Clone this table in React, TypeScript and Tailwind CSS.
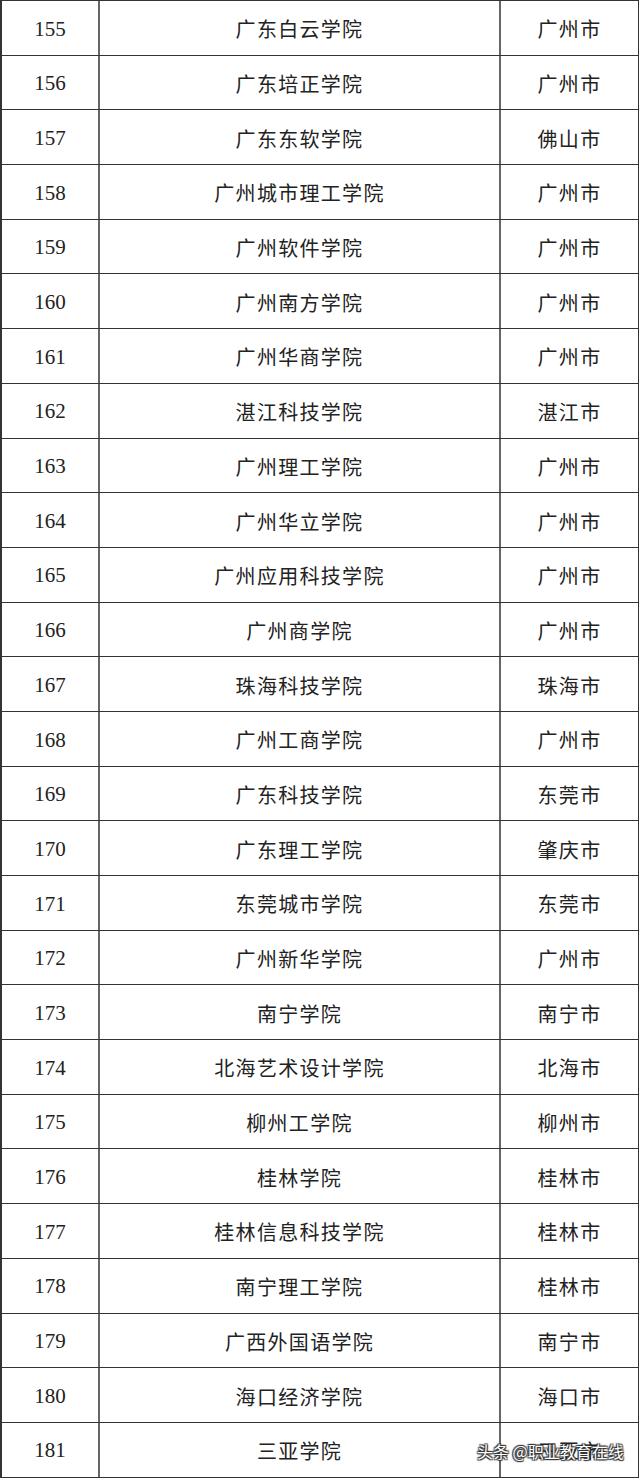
const rows: [number, string, string][] = [
  [155, "广东白云学院", "广州市"],
  [156, "广东培正学院", "广州市"],
  [157, "广东东软学院", "佛山市"],
  [158, "广州城市理工学院", "广州市"],
  [159, "广州软件学院", "广州市"],
  [160, "广州南方学院", "广州市"],
  [161, "广州华商学院", "广州市"],
  [162, "湛江科技学院", "湛江市"],
  [163, "广州理工学院", "广州市"],
  [164, "广州华立学院", "广州市"],
  [165, "广州应用科技学院", "广州市"],
  [166, "广州商学院", "广州市"],
  [167, "珠海科技学院", "珠海市"],
  [168, "广州工商学院", "广州市"],
  [169, "广东科技学院", "东莞市"],
  [170, "广东理工学院", "肇庆市"],
  [171, "东莞城市学院", "东莞市"],
  [172, "广州新华学院", "广州市"],
  [173, "南宁学院", "南宁市"],
  [174, "北海艺术设计学院", "北海市"],
  [175, "柳州工学院", "柳州市"],
  [176, "桂林学院", "桂林市"],
  [177, "桂林信息科技学院", "桂林市"],
  [178, "南宁理工学院", "桂林市"],
  [179, "广西外国语学院", "南宁市"],
  [180, "海口经济学院", "海口市"],
  [181, "三亚学院", "三亚市"],
];

const cjk = "font-['Noto_Sans_CJK_SC',sans-serif]";

export default function App() {
  return (
    <div className="relative w-[640px] bg-white text-[#222]">
      <div className="w-[639px] border-l-2 border-r border-t border-[#333]">
        {rows.map(([n, name, city]) => (
          <div key={n} className="flex h-[54.7px] border-b border-[#333]">
            <div className="flex w-[98px] items-center justify-center border-r-2 border-[#666] pt-[3px] font-['Liberation_Serif',serif] text-[21px]">
              {n}
            </div>
            <div className={`flex w-[401px] items-center justify-center border-r-2 border-[#666] pt-[3px] text-[20px] tracking-[1.3px] ${cjk}`}>
              {name}
            </div>
            <div className={`flex flex-1 items-center justify-center pt-[3px] text-[20px] tracking-[1.3px] ${cjk}`}>
              {city}
            </div>
          </div>
        ))}
      </div>
      {/* watermark */}
      <div
        className={`absolute left-[477px] top-[1443px] text-[16px] leading-none text-white ${cjk} [text-shadow:0_0_1px_#333,1px_1px_1px_#333,-1px_-1px_1px_#333,1px_-1px_1px_#333,-1px_1px_1px_#333]`}
      >
        头条 @职业教育在线
      </div>
    </div>
  );
}
